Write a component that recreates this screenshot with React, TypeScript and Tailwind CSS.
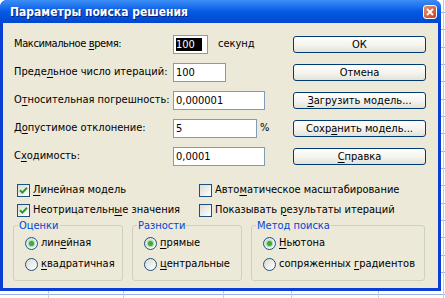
import React from 'react';

const U = ({ children }: { children: React.ReactNode }) => (
  <span className="underline decoration-1 underline-offset-[2px]">{children}</span>
);

const Field = ({ value, width, selected }: { value: string; width: string; selected?: boolean }) => (
  <div className={`${width} h-[19px] bg-white border border-[#7F9DB9] flex items-center px-[2px]`}>
    <span className={selected ? 'bg-black text-white pr-[7px] leading-[13px]' : 'leading-[13px]'}>{value}</span>
  </div>
);

const XpButton = ({ children }: { children: React.ReactNode }) => (
  <button className="w-[133px] h-[17px] rounded-[3px] border border-[#003C74] bg-gradient-to-b from-white via-[#F5F4EF] to-[#E3E2DA] flex items-center justify-center leading-none text-black">
    {children}
  </button>
);

const Check = ({ checked, children }: { checked?: boolean; children: React.ReactNode }) => (
  <div className="flex items-center h-[16px] gap-[3px]">
    <div className="w-[13px] h-[13px] border border-[#1C5180] bg-gradient-to-br from-[#DCDBD5] to-white flex items-center justify-center">
      {checked && (
        <svg width="9" height="9" viewBox="0 0 9 9">
          <path d="M1 4.2 L3.4 6.6 L8 1.8" stroke="#21A121" strokeWidth="2" fill="none" />
        </svg>
      )}
    </div>
    <span>{children}</span>
  </div>
);

const Radio = ({ checked, children }: { checked?: boolean; children: React.ReactNode }) => (
  <div className="flex items-center h-[14px] gap-[3px]">
    <div className="w-[13px] h-[13px] rounded-full border border-[#1C5180] bg-gradient-to-br from-[#DCDBD5] to-white flex items-center justify-center">
      {checked && <div className="w-[5px] h-[5px] rounded-full bg-[#3DAA3D] shadow-[0_0_1px_1px_#9FD89F]" />}
    </div>
    <span>{children}</span>
  </div>
);

const Group = ({ title, width, children }: { title: string; width: string; children: React.ReactNode }) => (
  <fieldset className={`${width} h-[62px] border border-[#D0D0BF] rounded-[3px]`}>
    <legend className="ml-[4px] px-[1px] text-[#0046D5] leading-[13px]">{title}</legend>
    <div className="flex flex-col gap-[7px] pl-[11px] pt-[4px]">{children}</div>
  </fieldset>
);

const Sheet = () => (
  <svg className="absolute inset-0" width="445" height="298">
    <rect width="445" height="298" fill="#fff" />
    {[12, 29, 47, 64, 81, 99, 116, 133, 151, 168, 185, 203, 220, 237, 255, 272, 294].map((y) => (
      <line key={y} x1="0" x2="445" y1={y + 0.5} y2={y + 0.5} stroke="#9DB2E0" />
    ))}
    {[48, 123, 223, 291, 378, 443].map((x) => (
      <line key={x} x1={x + 0.5} x2={x + 0.5} y1="0" y2="298" stroke="#C6CCD8" />
    ))}
  </svg>
);

export default function App() {
  return (
    <div className="relative w-[445px] h-[298px] overflow-hidden text-[11px] text-black [font-family:'DejaVu_Sans_Condensed','Liberation_Sans',sans-serif]">
      <Sheet />
      <div className="relative w-[441px] h-[291px] flex flex-col rounded-t-[7px] bg-[#0A3FD6]">
        {/* title bar */}
        <div className="h-[23px] rounded-t-[7px] bg-gradient-to-b from-[#3C8EF6] via-[#0459E5] to-[#0447CF] flex items-center pl-[10px] pr-[4px]">
          <span className="text-white font-bold text-[12px] [text-shadow:1px_1px_0_#0A1E7A]">Параметры поиска решения</span>
          <div className="ml-auto mt-[1px] w-[14px] h-[14px] rounded-[3px] border border-white bg-gradient-to-br from-[#E8906E] to-[#C3401F] flex items-center justify-center">
            <svg width="8" height="8" viewBox="0 0 8 8">
              <path d="M1 1 L7 7 M7 1 L1 7" stroke="#fff" strokeWidth="1.8" />
            </svg>
          </div>
        </div>

        {/* body */}
        <div className="flex-1 mx-[3px] mb-[3px] bg-[#ECE9D8] flex flex-col pt-[12px] px-[10px]">
          <div className="flex">
            <div className="flex flex-col gap-[9px] pl-[1px]">
              <div className="flex items-center h-[19px]">
                <span className="w-[159px] tracking-[-0.4px]">Максимальное <U>в</U>ремя:</span>
                <Field value="100" width="w-[35px]" selected />
                <span className="ml-[10px]">секунд</span>
              </div>
              <div className="flex items-center h-[19px]">
                <span className="w-[159px]">Преде<U>л</U>ьное число итераций:</span>
                <Field value="100" width="w-[53px]" />
              </div>
              <div className="flex items-center h-[19px]">
                <span className="w-[159px]">О<U>т</U>носительная погрешность:</span>
                <Field value="0,000001" width="w-[92px]" />
              </div>
              <div className="flex items-center h-[19px]">
                <span className="w-[159px]">Д<U>о</U>пустимое отклонение:</span>
                <Field value="5" width="w-[84px]" />
                <span className="ml-[3px]">%</span>
              </div>
              <div className="flex items-center h-[19px]">
                <span className="w-[159px]">С<U>х</U>одимость:</span>
                <Field value="0,0001" width="w-[92px]" />
              </div>
            </div>
            <div className="ml-auto mr-[2px] pt-[1px] flex flex-col gap-[11px]">
              <XpButton>ОК</XpButton>
              <XpButton>Отмена</XpButton>
              <XpButton><U>З</U>агрузить модель...</XpButton>
              <XpButton>Сохр<U>а</U>нить модель...</XpButton>
              <XpButton><U>С</U>правка</XpButton>
            </div>
          </div>

          <div className="mt-[16px] ml-[4px] grid grid-cols-[182px_1fr] gap-y-[4px]">
            <Check checked><U>Л</U>инейная модель</Check>
            <Check>Авто<U>м</U>атическое масштабирование</Check>
            <Check checked>Неотрицательн<U>ы</U>е значения</Check>
            <Check>Показывать <U>р</U>езультаты итераций</Check>
          </div>

          <div className="mt-[1px] flex gap-[9px]">
            <Group title="Оценки" width="w-[110px]">
              <Radio checked>лин<U>е</U>йная</Radio>
              <Radio><U>к</U>вадратичная</Radio>
            </Group>
            <Group title="Разности" width="w-[110px]">
              <Radio checked><U>п</U>рямые</Radio>
              <Radio><U>ц</U>ентральные</Radio>
            </Group>
            <Group title="Метод поиска" width="w-[174px]">
              <Radio checked><U>Н</U>ьютона</Radio>
              <Radio>сопряженных <U>г</U>радиентов</Radio>
            </Group>
          </div>
        </div>
      </div>
    </div>
  );
}
